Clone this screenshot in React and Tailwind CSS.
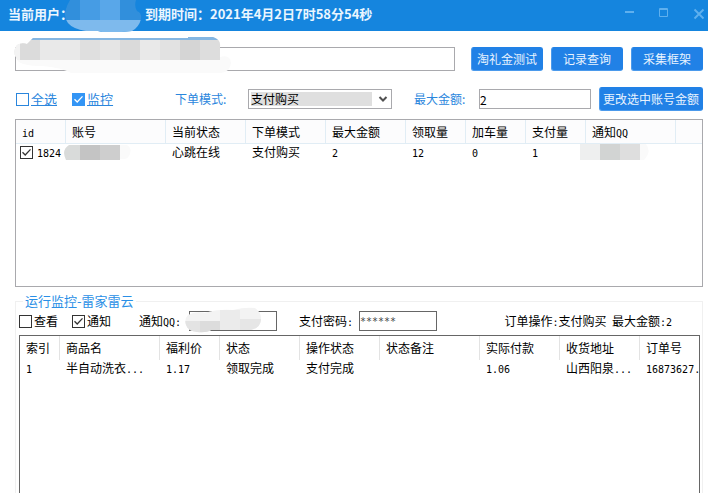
import React, { useState } from 'react';

const accountColumns = [
    { title: 'id', width: 'w-[50px]' },
    { title: '账号', width: 'w-[100px]' },
    { title: '当前状态', width: 'w-[80px]' },
    { title: '下单模式', width: 'w-[80px]' },
    { title: '最大金额', width: 'w-[80px]' },
    { title: '领取量', width: 'w-[60px]' },
    { title: '加车量', width: 'w-[60px]' },
    { title: '支付量', width: 'w-[60px]' },
    { title: '通知QQ', width: 'w-[90px]' },
    { title: '', width: '' },
];

const orderColumns = [
    { title: '索引', width: 'w-[40px]' },
    { title: '商品名', width: 'w-[100px]' },
    { title: '福利价', width: 'w-[60px]' },
    { title: '状态', width: 'w-[80px]' },
    { title: '操作状态', width: 'w-[80px]' },
    { title: '状态备注', width: 'w-[100px]' },
    { title: '实际付款', width: 'w-[80px]' },
    { title: '收货地址', width: 'w-[80px]' },
    { title: '订单号', width: '' },
];

const orders = [
    ['1', '半自动洗衣...', '1.17', '领取完成', '支付完成', '', '1.06', '山西阳泉...', '16873627.'],
];

// Latin letters and digits take half the width of a Chinese character
const Mixed = ({ text }) =>
    text.split(/([\x20-\x7e]+)/).filter(Boolean).map((part, i) =>
        /[\x20-\x7e]/.test(part) ? (
            <span key={i} className="font-['DejaVu_Sans_Mono','Liberation_Mono',monospace] text-[10px] leading-none whitespace-pre">{part}</span>
        ) : (
            <span key={i}>{part}</span>
        )
    );

const CheckBox = ({ id, label, checked: initial = false, blue = false, children }) => {
    const [checked, setChecked] = useState(initial);
    const box = blue
        ? 'border-[#2a86dd] checked:bg-[#3395f5] checked:border-[#3395f5]'
        : 'border-[#333333]';

    return (
        <span className="flex items-center gap-0.5">
            <span className="relative block size-[13px] shrink-0">
                <input
                    id={id}
                    type="checkbox"
                    aria-label={label}
                    checked={checked}
                    onChange={(e) => setChecked(e.target.checked)}
                    className={`block size-[13px] appearance-none border bg-white ${box}`}
                />
                {checked && (
                    <svg viewBox="0 0 13 13" className={`pointer-events-none absolute inset-0 size-[13px] ${blue ? 'text-white' : 'text-[#333333]'}`}>
                        <path d="M2.5 6.2 5.2 9 10.5 3.4" fill="none" stroke="currentColor" strokeWidth="1.3" />
                    </svg>
                )}
            </span>
            {children}
        </span>
    );
};

const ActionButton = ({ children, wide = false }) => (
    <button
        type="button"
        className={`h-6 shrink-0 rounded-[3px] border border-[#4b9aec] border-t-[#2181e6] border-r-[#2181e6] bg-[#2181e6] text-xs whitespace-nowrap text-[#e8f3ff] ${wide ? 'w-26' : 'w-18'}`}
    >
        {children}
    </button>
);

const TitleBar = () => (
    <header className="relative flex h-[31px] shrink-0 items-center bg-[#1585de] pl-2 text-[13px] font-bold text-[#eaf6ff]">
        <span className="w-[137px] shrink-0 pb-1">当前用户：</span>
        <span className="flex-1 pb-1 whitespace-nowrap">到期时间：2021年4月2日7时58分54秒</span>
        <div className="flex h-full items-start gap-6 pt-1.5 pr-[3px] text-[#5fb0ee]">
            <button type="button" aria-label="最小化">
                <svg viewBox="0 0 10 12" className="h-3 w-2.5"><path d="M0 6h9" stroke="currentColor" strokeWidth="2" /></svg>
            </button>
            <button type="button" aria-label="最大化">
                <svg viewBox="0 0 10 12" className="h-3 w-2.5"><path d="M.5 2.5h8v8h-8zM0 3.5h9" fill="none" stroke="currentColor" /></svg>
            </button>
            <button type="button" aria-label="关闭">
                <svg viewBox="0 0 12 14" className="h-3.5 w-3"><path d="M1.5 3.5 10.5 12.5M10.5 3.5 1.5 12.5" stroke="currentColor" strokeWidth="1.9" /></svg>
            </button>
        </div>
        <svg viewBox="0 0 78 33" className="absolute top-0 left-16 h-[33px] w-[78px]">
            <clipPath id="user-mask">
                <path d="M6 0H72Q70 6 73 11Q78 13 77 19Q75 27 68 31L58 32H38L34 31H22Q9 29 4 23Q-1 16 2 9Q3 5 6 0Z" />
            </clipPath>
            <g clipPath="url(#user-mask)">
                <rect width="78" height="33" fill="#318fdc" />
                <rect x="16" width="20" height="20" fill="#469ce4" />
                <rect x="36" width="20" height="20" fill="#59a7e9" />
                <rect y="20" width="78" height="13" fill="#7ebaed" />
            </g>
        </svg>
    </header>
);

const TableHead = ({ columns, cell }) => (
    <thead>
        <tr>
            {columns.map(({ title, width }, i) => (
                <th key={i} className={`h-6 p-0 pl-1.5 text-left font-normal whitespace-nowrap ${width} ${cell} ${i < columns.length - 1 ? 'border-r' : ''}`}>
                    <Mixed text={title} />
                </th>
            ))}
        </tr>
    </thead>
);

const AccountTable = () => (
    <div className="mt-2 h-42 shrink-0 overflow-hidden border border-[#a9a9ad]">
        <table className="w-full table-fixed border-separate border-spacing-0">
            <TableHead columns={accountColumns} cell="border-b border-[#e1edf5] bg-[#fcfcfd]" />
            <tbody>
                <tr className="h-4 whitespace-nowrap">
                    <td className="p-0 pl-1">
                        <CheckBox id="account-1824" label="1824" checked>
                            <label htmlFor="account-1824" className="pl-0.5"><Mixed text="1824" /></label>
                        </CheckBox>
                    </td>
                    <td className="p-0">
                        {/* hidden account name */}
                        <svg viewBox="0 0 70 16" className="-ml-0.5 block h-4 w-[70px]">
                            <path d="M54 1H63Q68 4 66 10Q64 15 60 15H54Z" fill="#fafafa" />
                            <path d="M5 1H16V16H2Q-3 6 5 1Z" fill="#d9dbda" />
                            <rect x="16" y="1" width="20" height="15" fill="#c4c4c4" />
                            <rect x="36" y="1" width="20" height="15" fill="#cecece" />
                        </svg>
                    </td>
                    <td className="p-0 pl-1.5">心跳在线</td>
                    <td className="p-0 pl-1.5">支付购买</td>
                    <td className="p-0 pl-1.5"><Mixed text="2" /></td>
                    <td className="p-0 pl-1.5"><Mixed text="12" /></td>
                    <td className="p-0 pl-1.5"><Mixed text="0" /></td>
                    <td className="p-0 pl-1.5"><Mixed text="1" /></td>
                    <td className="p-0">
                        {/* hidden QQ number */}
                        <svg viewBox="0 0 70 16" className="-ml-1.5 block h-4 w-[70px]">
                            <path d="M0 0H66Q72 8 64 16H0Z" fill="#fafafa" />
                            <rect width="20" height="16" fill="#eeefef" />
                            <rect x="20" width="20" height="16" fill="#d2d4d3" />
                            <rect x="40" width="20" height="16" fill="#dedede" />
                        </svg>
                    </td>
                    <td className="p-0"></td>
                </tr>
            </tbody>
        </table>
    </div>
);

const OrderTable = () => (
    <div className="mt-1 min-h-0 flex-1 overflow-hidden border border-b-0 border-[#666666]">
        <table className="w-full table-fixed border-separate border-spacing-0">
            <TableHead columns={orderColumns} cell="border-[#e3e3e3]" />
            <tbody>
                {orders.map((row) => (
                    <tr key={row[0]} className="h-4 whitespace-nowrap">
                        {row.map((value, i) => (
                            <td key={i} className="p-0 pl-1.5"><Mixed text={value} /></td>
                        ))}
                    </tr>
                ))}
            </tbody>
        </table>
    </div>
);

const App = () => {
    return (
        <div className="flex h-screen flex-col overflow-hidden bg-white font-['Noto_Sans_CJK_SC',sans-serif] text-xs leading-4 text-black">
            <TitleBar />

            <main className="flex min-h-0 flex-1 flex-col pt-4 pr-[5px] pl-[15px]">
                <div className="relative flex shrink-0 gap-2">
                    <input type="text" aria-label="链接" className="mr-2 h-6 min-w-0 flex-1 border border-[#a9a9ad] px-1" />
                    <ActionButton>淘礼金测试</ActionButton>
                    <ActionButton>记录查询</ActionButton>
                    <ActionButton>采集框架</ActionButton>
                    {/* hidden link */}
                    <svg viewBox="0 0 218 37" className="pointer-events-none absolute -top-2.5 -left-0.5 h-[37px] w-[218px]">
                        <path d="M3 20H207Q217 17 218 26Q217 35 208 36H58Q50 31 30 29Q8 29 4 23Z" fill="#fafafa" />
                        <clipPath id="link-mask">
                            <path d="M4 8Q9 5 14 7L20 1H175V0H200Q208 3 207 9V23H5Q-2 15 4 8Z" />
                        </clipPath>
                        <g clipPath="url(#link-mask)">
                            <rect width="218" height="23" fill="#e9e9e9" />
                            <rect width="7" height="23" fill="#f3f3f3" />
                            <rect x="7" width="20" height="23" fill="#dbdbdb" />
                            <rect x="67" width="20" height="23" fill="#dfdfdf" />
                            <rect x="87" width="20" height="23" fill="#e5e5e5" />
                            <rect x="107" width="20" height="23" fill="#dadada" />
                            <rect x="147" width="20" height="23" fill="#e2e2e2" />
                            <rect x="167" width="20" height="23" fill="#d5d5d5" />
                            <rect x="187" width="31" height="23" fill="#dddddd" />
                            <rect x="16" width="202" height="3" fill="#84b6e2" />
                        </g>
                    </svg>
                </div>

                <div className="mt-4 flex h-6 shrink-0 items-center text-[#2a86dd]">
                    <div className="flex w-40 shrink-0 gap-[15px] pl-px text-[13px] underline">
                        <CheckBox id="select-all" blue>
                            <label htmlFor="select-all">全选</label>
                        </CheckBox>
                        <CheckBox id="watch" blue checked>
                            <label htmlFor="watch">监控</label>
                        </CheckBox>
                    </div>
                    <label htmlFor="mode" className="w-[73px] shrink-0">下单模式:</label>
                    <div className="flex h-5 w-36 shrink-0 items-center border border-[#a9a9ad] pl-0.5 text-black">
                        <select id="mode" className="h-3.5 w-[121px] appearance-none bg-[#dfdfdf] leading-3.5">
                            <option>支付购买</option>
                        </select>
                        <svg viewBox="0 0 10 8" className="pointer-events-none ml-1.5 h-2 w-2.5">
                            <path d="M1.5 2 5 5.5 8.5 2" fill="none" stroke="#505050" strokeWidth="2" />
                        </svg>
                    </div>
                    <label htmlFor="limit" className="ml-[22px] w-[65px] shrink-0">最大金额:</label>
                    <input id="limit" type="text" defaultValue="2" className="mr-2 h-5 min-w-0 flex-1 border border-[#a9a9ad] text-xs text-black" />
                    <ActionButton wide>更改选中账号金额</ActionButton>
                </div>

                <AccountTable />

                <fieldset className="mt-1.5 flex min-h-0 min-w-0 flex-1 flex-col border border-b-0 border-[#f0f0f0] pr-0.5 pl-[3px]">
                    <legend className="ml-1 px-0.5 text-[13px] text-[#2a8fe6]">运行监控-雷家雷云</legend>
                    <div className="mt-0.5 flex h-5 shrink-0 items-center whitespace-nowrap">
                        <div className="flex w-[120px] shrink-0 gap-3.5">
                            <CheckBox id="view">
                                <label htmlFor="view">查看</label>
                            </CheckBox>
                            <CheckBox id="notify" checked>
                                <label htmlFor="notify">通知</label>
                            </CheckBox>
                        </div>
                        <label htmlFor="qq" className="w-[50px] shrink-0"><Mixed text="通知QQ:" /></label>
                        <div className="relative mr-[22px] h-5 w-22 shrink-0">
                            <input id="qq" type="text" className="block h-5 w-full border border-[#666666] px-px" />
                            {/* hidden QQ number */}
                            <svg viewBox="0 0 76 26" className="pointer-events-none absolute -top-1 -left-1 h-[26px] w-[76px]">
                                <clipPath id="qq-mask">
                                    <path d="M3 8Q10 4 20 6Q32 2 48 3Q60 0 70 1Q77 6 76 13Q75 21 66 23H26Q22 26 12 25Q3 24 1 18Q-1 12 3 8Z" />
                                </clipPath>
                                <g clipPath="url(#qq-mask)">
                                    <rect width="76" height="26" fill="#f3f3f3" />
                                    <rect y="14" width="15" height="12" fill="#e3e3e3" />
                                    <rect x="15" y="14" width="20" height="12" fill="#dcdcdc" />
                                    <rect x="35" y="3" width="20" height="20" fill="#ebebeb" />
                                    <rect x="55" y="12" width="21" height="12" fill="#e6e6e6" />
                                </g>
                            </svg>
                        </div>
                        <label htmlFor="password" className="w-[60px] shrink-0"><Mixed text="支付密码:" /></label>
                        <input id="password" type="text" defaultValue="******" className="h-5 w-[78px] shrink-0 border border-[#666666] font-['DejaVu_Sans_Mono','Liberation_Mono',monospace] text-[10px] text-[#444444]" />
                        <span className="ml-auto pr-7"><Mixed text="订单操作:支付购买" />&nbsp; <Mixed text="最大金额:2" /></span>
                    </div>
                    <OrderTable />
                </fieldset>
            </main>
        </div>
    );
};

export default App;
